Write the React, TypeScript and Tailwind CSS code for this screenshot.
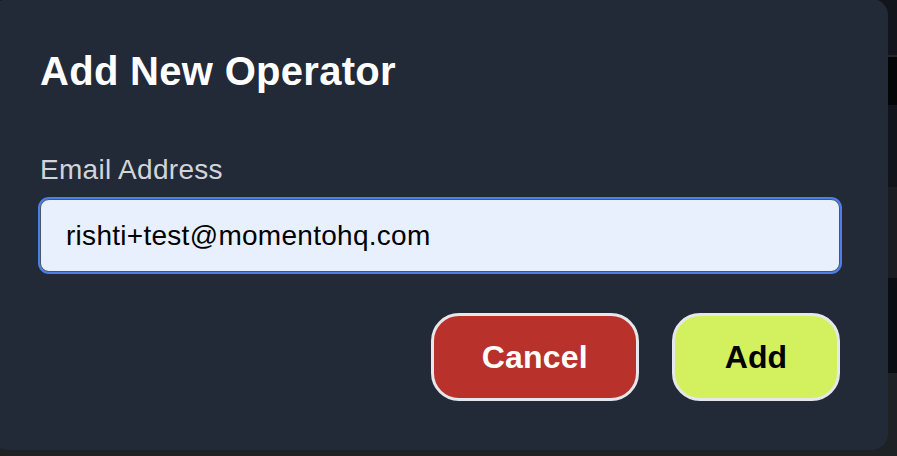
import { useState } from "react";

const rows = [
  { h: "h-[55px]", bg: "bg-[#12151b]" },
  { h: "h-[2px]", bg: "bg-[#22262d]" },
  { h: "h-[48px]", bg: "bg-[#040506]" },
  { h: "h-[82px]", bg: "bg-[#11141a]" },
  { h: "h-[91px]", bg: "bg-[#1a1c22]" },
  { h: "h-[95px]", bg: "bg-[#0a0d12]" },
  { h: "h-[83px]", bg: "bg-[#1f2225]" },
];

export default function App() {
  const [email, setEmail] = useState("rishti+test@momentohq.com");

  return (
    <div className="relative w-[897px] h-[456px] overflow-hidden bg-[#1f2225] font-['Liberation_Sans',Arial,sans-serif]">
      {/* page behind the modal */}
      <div className="flex flex-col">
        {rows.map((r, i) => (
          <div key={i} className={`${r.h} ${r.bg}`} />
        ))}
      </div>

      {/* modal */}
      <div className="absolute left-[-8px] top-[-1px] w-[896px] h-[451px] rounded-2xl bg-[#222937] px-12 pt-12 pb-12 flex flex-col">
        <h2 className="text-[40px] leading-[48px] font-bold tracking-[0.3px] text-white">Add New Operator</h2>

        <label className="mt-[55px] text-[28px] leading-[40px] tracking-[0.3px] text-[#d1d5db]">Email Address</label>
        <input
          value={email}
          onChange={(e) => setEmail(e.target.value)}
          className="mt-[9px] h-[73px] w-full rounded-[9px] border border-[#4b5563] bg-[#e8f0fe] px-[25px] text-[28px] tracking-[0.28px] text-black outline-none ring-2 ring-[#4a80e8]"
        />

        <div className="mt-[41px] flex justify-end gap-[33px]">
          <button className="h-[88px] px-[48px] rounded-[28px] border-[3px] border-[#e5e7eb] bg-[#b8312a] text-[32px] font-bold tracking-[0.2px] text-white">
            Cancel
          </button>
          <button className="h-[88px] px-[50px] rounded-[28px] border-[3px] border-[#e5e7eb] bg-[#d3f15f] text-[32px] font-bold text-black">
            Add
          </button>
        </div>
      </div>
    </div>
  );
}
